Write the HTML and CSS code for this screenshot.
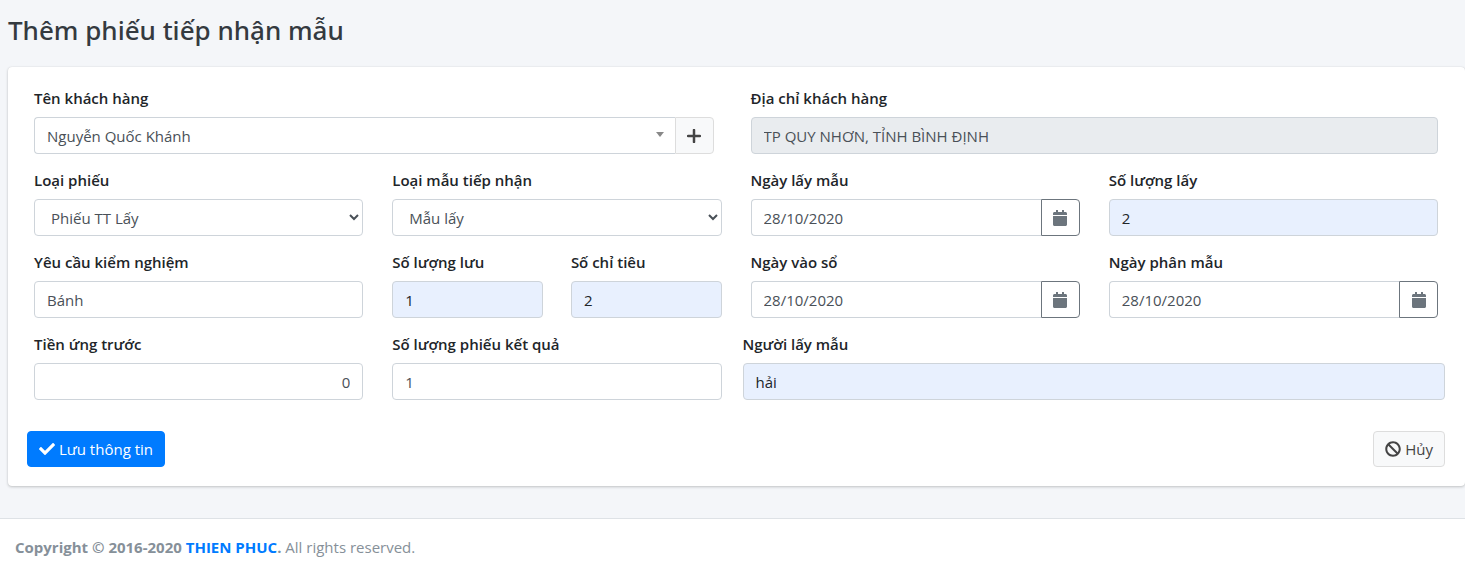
FILE: index.html
```html
<!DOCTYPE html>
<html lang="vi">
<head>
<meta charset="utf-8">
<meta name="viewport" content="width=device-width, initial-scale=1">
<title>Thêm phiếu tiếp nhận mẫu</title>
<link rel="stylesheet" href="styles.css">
</head>
<body>
<svg class="sprite" aria-hidden="true">
  <symbol id="icon-calendar" viewBox="0 0 448 512"><path d="M12 192h424c6.600 0 12 5.400 12 12v260c0 26.500-21.500 48-48 48H48c-26.500 0-48-21.500-48-48V204c0-6.600 5.400-12 12-12zm436-44v-36c0-26.500-21.500-48-48-48h-48V12c0-6.600-5.400-12-12-12h-40c-6.600 0-12 5.400-12 12v52H160V12c0-6.600-5.400-12-12-12h-40c-6.600 0-12 5.400-12 12v52H48C21.500 64 0 85.500 0 112v36c0 6.600 5.400 12 12 12h424c6.600 0 12-5.400 12-12z"/></symbol>
</svg>
<main class="content">
  <h1 class="page-title">Thêm phiếu tiếp nhận mẫu</h1>
  <form class="card">
    <div class="fields">
      <div class="field span-2 customer">
        <label for="customer">Tên khách hàng</label>
        <div class="group">
          <div class="combo">
            <select id="customer" class="control combo-select"><option>Nguyễn Quốc Khánh</option></select>
            <svg class="combo-arrow" viewBox="0 0 8 5" aria-hidden="true"><path d="M0 0h8L4 5z"/></svg>
          </div>
          <button type="button" class="addon add" aria-label="Thêm khách hàng">
            <svg class="icon-plus" viewBox="0 0 14 14" aria-hidden="true"><path d="M7 1v12M1 7h12"/></svg>
          </button>
        </div>
      </div>
      <div class="field span-2">
        <label for="address">Địa chỉ khách hàng</label>
        <input id="address" class="control readonly" type="text" value="TP QUY NHƠN, TỈNH BÌNH ĐỊNH" readonly>
      </div>

      <div class="field">
        <label for="form-type">Loại phiếu</label>
        <select id="form-type" class="control"><option>Phiếu TT Lấy</option></select>
      </div>
      <div class="field">
        <label for="sample-type">Loại mẫu tiếp nhận</label>
        <select id="sample-type" class="control"><option>Mẫu lấy</option></select>
      </div>
      <div class="field">
        <label for="sample-date">Ngày lấy mẫu</label>
        <div class="group">
          <input id="sample-date" class="control" type="text" value="28/10/2020">
          <button type="button" class="addon date" aria-label="Chọn ngày lấy mẫu"><svg class="icon-calendar"><use href="#icon-calendar"/></svg></button>
        </div>
      </div>
      <div class="field">
        <label for="sample-count">Số lượng lấy</label>
        <input id="sample-count" class="control filled" type="text" value="2">
      </div>

      <div class="field">
        <label for="test-request">Yêu cầu kiểm nghiệm</label>
        <input id="test-request" class="control" type="text" value="Bánh">
      </div>
      <div class="pair">
        <div class="field">
          <label for="kept-count">Số lượng lưu</label>
          <input id="kept-count" class="control filled" type="text" value="1">
        </div>
        <div class="field">
          <label for="criteria-count">Số chỉ tiêu</label>
          <input id="criteria-count" class="control filled" type="text" value="2">
        </div>
      </div>
      <div class="field">
        <label for="entry-date">Ngày vào sổ</label>
        <div class="group">
          <input id="entry-date" class="control" type="text" value="28/10/2020">
          <button type="button" class="addon date" aria-label="Chọn ngày vào sổ"><svg class="icon-calendar"><use href="#icon-calendar"/></svg></button>
        </div>
      </div>
      <div class="field">
        <label for="assign-date">Ngày phân mẫu</label>
        <div class="group">
          <input id="assign-date" class="control" type="text" value="28/10/2020">
          <button type="button" class="addon date" aria-label="Chọn ngày phân mẫu"><svg class="icon-calendar"><use href="#icon-calendar"/></svg></button>
        </div>
      </div>

      <div class="field">
        <label for="deposit">Tiền ứng trước</label>
        <input id="deposit" class="control amount" type="text" value="0">
      </div>
      <div class="field">
        <label for="result-count">Số lượng phiếu kết quả</label>
        <input id="result-count" class="control" type="text" value="1">
      </div>
      <div class="field span-2 sampler">
        <label for="sampler">Người lấy mẫu</label>
        <input id="sampler" class="control filled" type="text" value="hải">
      </div>
    </div>
    <div class="actions">
      <button type="submit" class="btn primary">
        <svg class="icon" viewBox="0 0 512 512" aria-hidden="true"><path d="M173.900 439.400l-166.400-166.400c-10-10-10-26.200 0-36.200l36.200-36.200c10-10 26.200-10 36.200 0L192 312.700 432.100 72.600c10-10 26.200-10 36.200 0l36.200 36.200c10 10 10 26.200 0 36.200L210.100 439.400c-10 10-26.200 10-36.200 0z"/></svg>
        <span>Lưu thông tin</span>
      </button>
      <button type="button" class="btn light">
        <svg class="icon" viewBox="0 0 512 512" aria-hidden="true"><path d="M256 8C119 8 8 119 8 256s111 248 248 248 248-111 248-248S393 8 256 8zm130.100 117.900c65.400 65.400 70 165.500 20.300 235.600L150.500 105.600c70.200-49.800 170.300-45 235.600 20.300zM125.900 386.100c-65.400-65.400-70-165.500-20.300-235.600L361.500 406.400c-70.200 49.800-170.300 45-235.600-20.300z"/></svg>
        <span>Hủy</span>
      </button>
    </div>
  </form>
</main>
<footer class="footer"><strong>Copyright © 2016-2020 <a href="#">THIEN PHUC</a>.</strong> All rights reserved.</footer>
</body>
</html>
```
FILE: styles.css
```css
* { box-sizing: border-box; }

body {
  margin: 0;
  min-height: 100vh;
  display: flex;
  flex-direction: column;
  background: #f4f6f9;
  color: #212529;
  font: 15px/22px "Segoe UI", "Open Sans", "Noto Sans", sans-serif;
}

.sprite { display: none; }

.content { padding: 12px 0 32px 8px; }

.page-title {
  margin: 0 0 19px;
  font-family: "Segoe UI", "Noto Sans", sans-serif;
  font-size: 26px;
  line-height: 36px;
  font-weight: 500;
  color: #343a40;
}

.card {
  padding: 20px 20px 19px 19px;
  background: #fff;
  border-radius: 4px;
  box-shadow: 0 0 1px rgba(0, 0, 0, .125), 0 1px 3px rgba(0, 0, 0, .2);
}

.fields {
  display: grid;
  grid-template-columns: repeat(4, minmax(0, 1fr));
  gap: 15px 29px;
  padding: 0 7px;
}

.field {
  display: flex;
  flex-direction: column;
  gap: 8px;
  min-width: 0;
}

.field label {
  font-weight: 600;
  white-space: nowrap;
}

.span-2 { grid-column: span 2; }
.customer { margin-right: 8px; }
.sampler { margin: 0 -7px 0 -8px; }

.pair {
  display: grid;
  grid-template-columns: repeat(2, minmax(0, 1fr));
  gap: 28px;
}

.control {
  width: 100%;
  min-width: 0;
  height: 37px;
  padding: 0 12px;
  border: 1px solid #ced4da;
  border-radius: 4px;
  background: #fff;
  color: #495057;
  font: inherit;
}

.readonly { background: #e9ecef; }
.filled { background: #e8f0fe; color: #212529; }
.amount { text-align: right; }

.group { display: flex; }

.group .control {
  border-right: 0;
  border-radius: 4px 0 0 4px;
}

.combo {
  position: relative;
  flex: 1;
}

.combo-select { appearance: none; }

.combo-arrow {
  position: absolute;
  top: 15px;
  right: 11px;
  width: 8px;
  height: 5px;
  fill: #888;
  pointer-events: none;
}

.addon {
  flex: none;
  display: flex;
  align-items: center;
  justify-content: center;
  width: 39px;
  padding: 0;
  border: 1px solid #ddd;
  border-radius: 0 4px 4px 0;
  background: #f8f9fa;
}

.date {
  border-color: #6c757d;
  background: #fff;
}

.icon-plus {
  width: 14px;
  height: 14px;
  fill: none;
  stroke: #444;
  stroke-width: 2.500;
  stroke-linecap: round;
}

.icon-calendar {
  width: 14px;
  height: 16px;
  fill: #6c757d;
}

.actions {
  display: flex;
  justify-content: space-between;
  margin-top: 31px;
}

.btn {
  display: flex;
  align-items: center;
  gap: 4px;
  height: 36px;
  padding: 0 11px;
  border: 1px solid;
  border-radius: 4px;
  font: inherit;
}

.primary {
  border-color: #007bff;
  background: #007bff;
  color: #fff;
}

.light {
  border-color: #ddd;
  background: #f8f9fa;
  color: #444;
}

.icon {
  width: 16px;
  height: 16px;
  fill: currentColor;
}

.footer {
  flex: 1;
  padding: 17px 15px;
  border-top: 1px solid #dee2e6;
  background: #fff;
  color: #869099;
}

.footer strong { font-weight: 700; }

.footer a {
  color: #007bff;
  text-decoration: none;
}
```
